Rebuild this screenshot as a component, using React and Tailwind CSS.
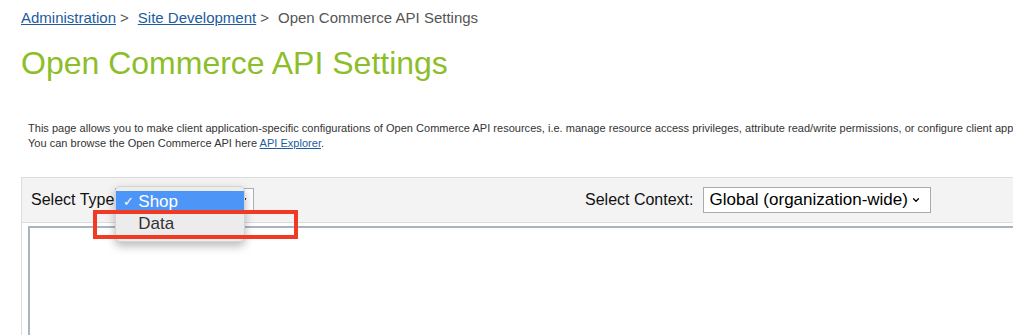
import React from 'react';
import { ChevronDown } from 'lucide-react';

const font = { fontFamily: '"Liberation Sans", Arial, sans-serif' };

const App = () => {
  return (
    <div className="relative w-[1013px] h-[335px] overflow-hidden bg-white" style={font}>
      {/* Breadcrumb */}
      <div className="pl-[21px] pt-[9px] text-[15px] leading-[18px] text-[#555] whitespace-nowrap">
        <a href="#" className="text-[#1d5c9e] underline">Administration</a>
        <span className="ml-[4px] mr-[9px]">&gt;</span>
        <a href="#" className="text-[#1d5c9e] underline">Site Development</a>
        <span className="ml-[4px] mr-[9px]">&gt;</span>
        <span>Open Commerce API Settings</span>
      </div>

      {/* Title */}
      <h1 className="pl-[21px] mt-[18px] text-[32px] leading-[36px] text-[#8cbe2a] whitespace-nowrap">
        Open Commerce API Settings
      </h1>

      {/* Description */}
      <div className="pl-[28px] mt-[40px] text-[11px] leading-[15px] text-[#333] whitespace-nowrap tracking-[0.02px]">
        <p>
          This page allows you to make client application-specific configurations of Open Commerce API resources, i.e. manage resource access privileges, attribute read/write permissions, or configure client application
        </p>
        <p>
          You can browse the Open Commerce API here{' '}
          <a href="#" className="text-[#1d5c9e] underline">API Explorer</a>.
        </p>
      </div>

      {/* Settings panel */}
      <div className="ml-[21px] mt-[26px] w-[1100px] h-[200px] border-l border-t border-[#dcdcdc]">
        <div className="flex items-center h-[45px] bg-[#f3f3f3] border-b border-[#dcdcdc] text-[16px] text-[#111]">
          <div className="flex items-center w-[563px] pl-[9px]">
            <span>Select Type</span>
            <div className="relative">
              <div className="flex items-center justify-end w-[139px] h-[24px] ml-[1px] bg-white border border-[#a9b1b9] pr-[5px]">
                <ChevronDown size={10} strokeWidth={3} className="text-black" />
              </div>
              {/* open option list */}
              <div className="absolute left-[1px] top-[-2px] w-[130px] pt-[4px] pb-[6px] bg-[#ececec] rounded-[5px] border border-[#d4d4d4] shadow-[0_4px_10px_rgba(0,0,0,0.28)] text-[17px] z-10">
                <div className="flex items-center h-[21px] bg-[#4d96f7] text-white">
                  <span className="w-[22px] pl-[7px] text-[13px]">✓</span>
                  <span>Shop</span>
                </div>
                <div className="flex items-center h-[23px] text-[#333]">
                  <span className="w-[22px]"></span>
                  <span>Data</span>
                </div>
              </div>
            </div>
          </div>
          <div className="flex items-center">
            <span>Select Context:</span>
            <div className="flex items-center h-[26px] ml-[9px] pl-[6px] pr-[9px] bg-white border border-[#a3abb3] text-[17px] text-black">
              <span>Global (organization-wide)</span>
              <ChevronDown size={10} strokeWidth={3} className="ml-[3px] text-black" />
            </div>
          </div>
        </div>
        <div className="ml-[6px] mt-[3px] h-[150px] border-l-2 border-t-2 border-[#aab4be] bg-white"></div>
      </div>

      {/* annotation box */}
      <div className="absolute left-[93px] top-[210px] w-[205px] h-[29px] border-[4px] border-[#f03a24] z-20"></div>
    </div>
  );
};

export default App;
